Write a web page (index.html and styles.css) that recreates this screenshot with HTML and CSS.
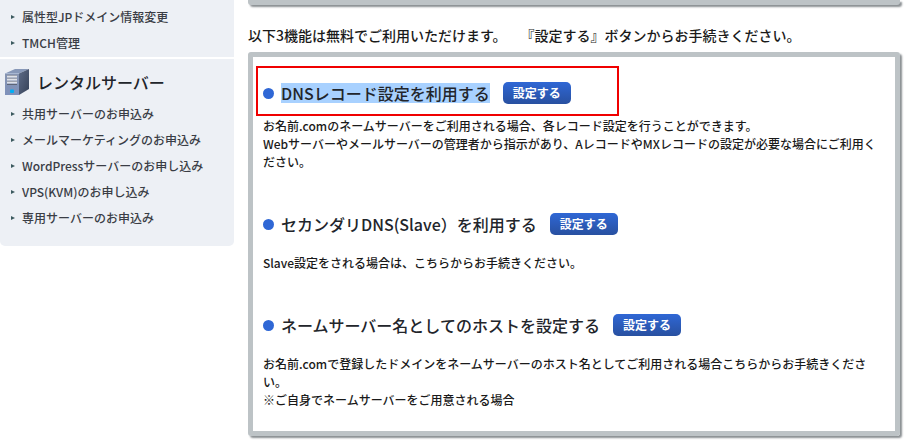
FILE: index.html
```html
<!DOCTYPE html>
<html lang="ja">
<head>
    <meta charset="UTF-8">
    <meta name="viewport" content="width=device-width, initial-scale=1.0">
    <title>DNS関連機能の設定</title>
    <link rel="stylesheet" href="styles.css">
</head>
<body>
    <div class="page">
        <nav class="sidebar">
            <div class="menu">
                <ul>
                    <li><a href="#">属性型JPドメイン情報変更</a></li>
                    <li><a href="#">TMCH管理</a></li>
                </ul>
            </div>
            <div class="menu menu-last">
                <h2>
                    <svg class="server-icon" width="24" height="27" viewBox="0 0 24 27" aria-hidden="true">
                        <defs>
                            <linearGradient id="front" x1="0" y1="0" x2="0" y2="1">
                                <stop offset="0" stop-color="#8795b1"/>
                                <stop offset="1" stop-color="#7e91bb"/>
                            </linearGradient>
                            <linearGradient id="side" x1="0" y1="0" x2="1" y2="1">
                                <stop offset="0" stop-color="#5d6b87"/>
                                <stop offset="1" stop-color="#354157"/>
                            </linearGradient>
                        </defs>
                        <path d="M0 4.500L10 0H24L14 4.500Z" fill="#8798b8"/>
                        <path d="M14 4.500L24 0V20L14 26Z" fill="url(#side)"/>
                        <path d="M0 4.500H14V26H0Z" fill="url(#front)"/>
                        <path d="M0 4.500H14" stroke="#a9b8d2"/>
                        <path d="M2 6.500H12M2 9.500H12M2 12.500H12M2 15.500H12" stroke="#5d6577"/>
                        <path d="M2 7.500H12M2 10.500H12M2 13.500H12" stroke="#dfe2e8" stroke-width="2"/>
                        <rect x="5" y="20.500" width="4" height="3.500" rx="1" fill="#00aef5"/>
                    </svg>
                    レンタルサーバー
                </h2>
                <ul>
                    <li><a href="#">共用サーバーのお申込み</a></li>
                    <li><a href="#">メールマーケティングのお申込み</a></li>
                    <li><a href="#">WordPressサーバーのお申し込み</a></li>
                    <li><a href="#">VPS(KVM)のお申し込み</a></li>
                    <li><a href="#">専用サーバーのお申込み</a></li>
                </ul>
            </div>
        </nav>

        <main>
            <div class="panel-end"></div>
            <p class="lead">以下3機能は無料でご利用いただけます。　『設定する』ボタンからお手続きください。</p>

            <div class="panel">
                <section>
                    <div class="title marked">
                        <h3><span class="selected">DNSレコード設定を利用する</span></h3>
                        <button type="button">設定する</button>
                    </div>
                    <p>お名前.comのネームサーバーをご利用される場合、各レコード設定を行うことができます。<br>
                    Webサーバーやメールサーバーの管理者から指示があり、AレコードやMXレコードの設定が必要な場合にご利用ください。</p>
                </section>
                <section>
                    <div class="title">
                        <h3>セカンダリDNS(Slave）を利用する</h3>
                        <button type="button">設定する</button>
                    </div>
                    <p>Slave設定をされる場合は、こちらからお手続きください。</p>
                </section>
                <section>
                    <div class="title">
                        <h3>ネームサーバー名としてのホストを設定する</h3>
                        <button type="button">設定する</button>
                    </div>
                    <p>お名前.comで登録したドメインをネームサーバーのホスト名としてご利用される場合こちらからお手続きください。<br>
                    ※ご自身でネームサーバーをご用意される場合</p>
                </section>
            </div>
        </main>
    </div>
</body>
</html>
```
FILE: styles.css
```css
* {
    margin: 0;
    padding: 0;
    box-sizing: border-box;
}

body {
    font-family: "Noto Sans CJK JP", sans-serif;
    font-size: 12px;
    font-weight: 500;
    line-height: 18px;
    text-spacing-trim: space-all;
    color: #1a1a1a;
    background-color: #fff;
}

.page {
    display: flex;
    align-items: flex-start;
    gap: 14px;
    padding: 0 4px 5px 0;
}

/* サイドメニュー */
.sidebar {
    flex: 0 0 234px;
}

.menu {
    padding: 4px 0 1px;
    background-color: #edf0f5;
}

.menu-last {
    margin-top: 2px;
    padding-bottom: 15px;
    border-radius: 0 0 5px 5px;
}

.menu h2 {
    display: flex;
    align-items: center;
    gap: 8px;
    height: 38px;
    padding-left: 5px;
    font-size: 16px;
    font-weight: 500;
    color: #22252b;
}

.menu ul {
    list-style: none;
}

.menu a {
    display: flex;
    align-items: center;
    gap: 7px;
    height: 26px;
    padding-left: 11px;
    color: #3a3d45;
    text-decoration: none;
}

.menu a::before {
    content: "";
    border-left: 4px solid #3c5a5f;
    border-top: 2px solid transparent;
    border-bottom: 2px solid transparent;
}

/* メイン */
main {
    flex: 1;
    min-width: 0;
}

.panel-end {
    height: 5px;
    background-color: #bdc3c6;
    border-radius: 0 0 3px 3px;
    box-shadow: 2px 2px 2px #8a8f92;
}

.lead {
    padding: 20px 0 7px;
    font-size: 14px;
    line-height: 20px;
}

.panel {
    padding: 9px 10px 22px;
    border: 5px solid #bdc3c6;
    border-radius: 3px;
    box-shadow: 2px 2px 2px #8a8f92;
}

.panel section + section {
    margin-top: 42px;
}

.title {
    display: flex;
    align-items: center;
    margin-bottom: 19px;
}

.title::before {
    content: "";
    width: 11px;
    height: 11px;
    margin-right: 7px;
    border-radius: 50%;
    background-color: #2f67d5;
}

.marked {
    width: 363px;
    margin: 0 0 1px -7px;
    padding: 14px 5px 10px;
    border: 2px solid #f00000;
}

.title h3 {
    margin-right: 13px;
    font-size: 16px;
    line-height: 20px;
    font-weight: 500;
    color: #22252b;
}

.selected {
    display: block;
    background-color: #a8d1ff;
}

button {
    width: 68px;
    height: 22px;
    font-family: inherit;
    font-size: 12px;
    font-weight: bold;
    line-height: 20px;
    color: #fff;
    background: linear-gradient(#2f67d5, #2850a0);
    border: none;
    border-radius: 5px;
    cursor: pointer;
}
```
